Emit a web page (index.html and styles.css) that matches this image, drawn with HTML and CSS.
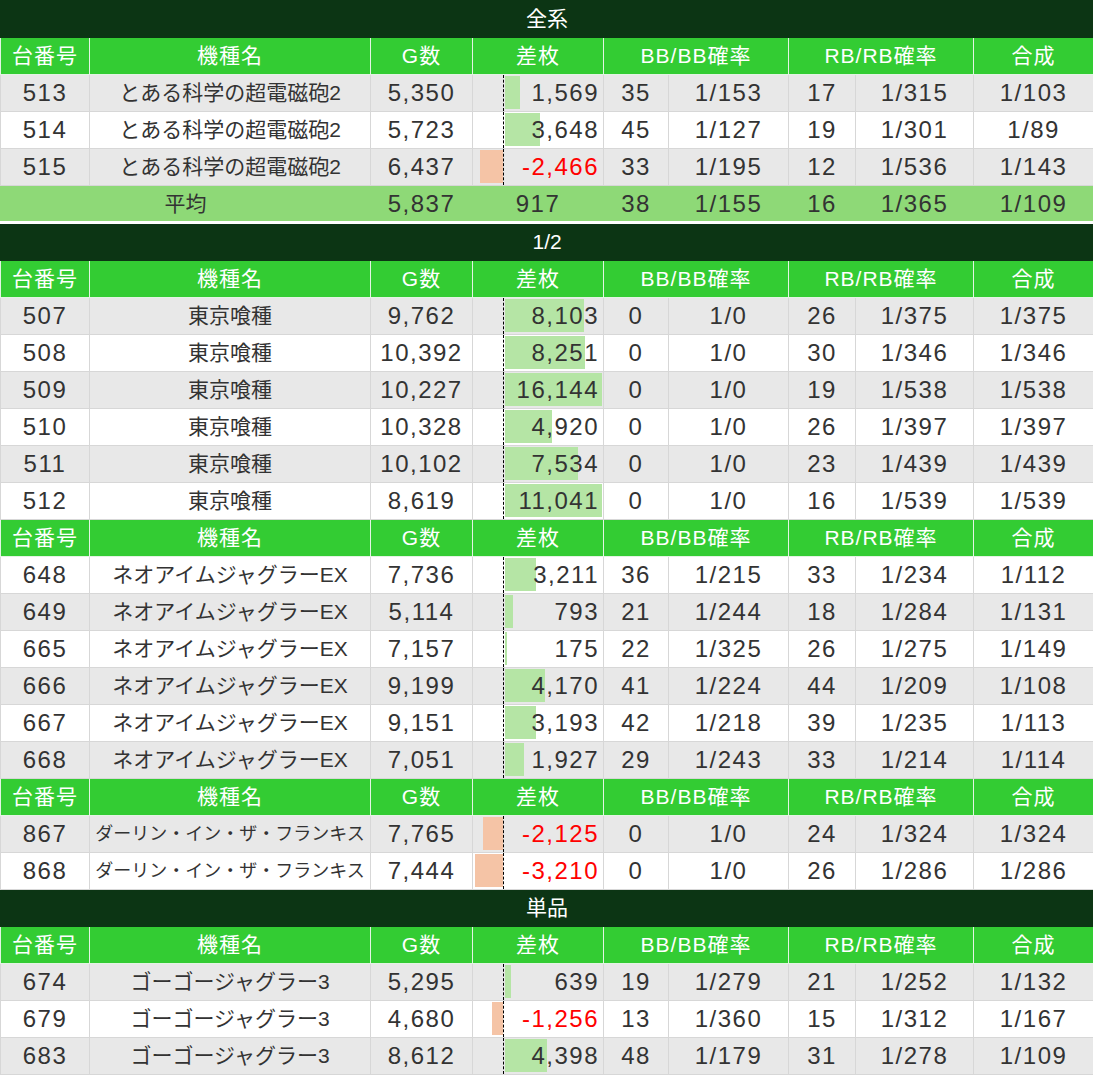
FILE: index.html
```html
<!DOCTYPE html>
<html lang="ja">
<head>
<meta charset="utf-8">
<title>データ</title>
<link rel="stylesheet" href="styles.css">
</head>
<body>
<table class="data">
<colgroup>
<col class="c-no"><col class="c-name"><col class="c-g"><col class="c-diff"><col class="c-bb"><col class="c-bbp"><col class="c-rb"><col class="c-rbp"><col class="c-sum">
</colgroup>
<tbody>
<tr class="title"><th colspan="9">全系</th></tr>
<tr class="head"><th>台番号</th><th>機種名</th><th>G数</th><th>差枚</th><th colspan="2">BB/BB確率</th><th colspan="2">RB/RB確率</th><th>合成</th></tr>
<tr class="g"><td>513</td><td class="name">とある科学の超電磁砲2</td><td class="num">5,350</td><td class="diff"><div class="bars"><div class="neg"></div><div class="pos"><span class="pb" style="width:15px"></span></div></div><span class="val">1,569</span></td><td class="num">35</td><td class="num">1/153</td><td class="num">17</td><td class="num">1/315</td><td class="num">1/103</td></tr>
<tr><td>514</td><td class="name">とある科学の超電磁砲2</td><td class="num">5,723</td><td class="diff"><div class="bars"><div class="neg"></div><div class="pos"><span class="pb" style="width:35px"></span></div></div><span class="val">3,648</span></td><td class="num">45</td><td class="num">1/127</td><td class="num">19</td><td class="num">1/301</td><td class="num">1/89</td></tr>
<tr class="g"><td>515</td><td class="name">とある科学の超電磁砲2</td><td class="num">6,437</td><td class="diff"><div class="bars"><div class="neg"><span class="nb" style="width:23px"></span></div><div class="pos"></div></div><span class="val minus">-2,466</span></td><td class="num">33</td><td class="num">1/195</td><td class="num">12</td><td class="num">1/536</td><td class="num">1/143</td></tr>
<tr class="avg"><td colspan="2" class="name">平均</td><td class="num">5,837</td><td class="num">917</td><td class="num">38</td><td class="num">1/155</td><td class="num">16</td><td class="num">1/365</td><td class="num">1/109</td></tr>
</tbody>
<tbody>
<tr class="title"><th colspan="9">1/2</th></tr>
<tr class="head"><th>台番号</th><th>機種名</th><th>G数</th><th>差枚</th><th colspan="2">BB/BB確率</th><th colspan="2">RB/RB確率</th><th>合成</th></tr>
<tr class="g"><td>507</td><td class="name">東京喰種</td><td class="num">9,762</td><td class="diff"><div class="bars"><div class="neg"></div><div class="pos"><span class="pb" style="width:79px"></span></div></div><span class="val">8,103</span></td><td class="num">0</td><td class="num">1/0</td><td class="num">26</td><td class="num">1/375</td><td class="num">1/375</td></tr>
<tr><td>508</td><td class="name">東京喰種</td><td class="num">10,392</td><td class="diff"><div class="bars"><div class="neg"></div><div class="pos"><span class="pb" style="width:80px"></span></div></div><span class="val">8,251</span></td><td class="num">0</td><td class="num">1/0</td><td class="num">30</td><td class="num">1/346</td><td class="num">1/346</td></tr>
<tr class="g"><td>509</td><td class="name">東京喰種</td><td class="num">10,227</td><td class="diff"><div class="bars"><div class="neg"></div><div class="pos"><span class="pb" style="width:97px"></span></div></div><span class="val">16,144</span></td><td class="num">0</td><td class="num">1/0</td><td class="num">19</td><td class="num">1/538</td><td class="num">1/538</td></tr>
<tr><td>510</td><td class="name">東京喰種</td><td class="num">10,328</td><td class="diff"><div class="bars"><div class="neg"></div><div class="pos"><span class="pb" style="width:47px"></span></div></div><span class="val">4,920</span></td><td class="num">0</td><td class="num">1/0</td><td class="num">26</td><td class="num">1/397</td><td class="num">1/397</td></tr>
<tr class="g"><td>511</td><td class="name">東京喰種</td><td class="num">10,102</td><td class="diff"><div class="bars"><div class="neg"></div><div class="pos"><span class="pb" style="width:73px"></span></div></div><span class="val">7,534</span></td><td class="num">0</td><td class="num">1/0</td><td class="num">23</td><td class="num">1/439</td><td class="num">1/439</td></tr>
<tr><td>512</td><td class="name">東京喰種</td><td class="num">8,619</td><td class="diff"><div class="bars"><div class="neg"></div><div class="pos"><span class="pb" style="width:97px"></span></div></div><span class="val">11,041</span></td><td class="num">0</td><td class="num">1/0</td><td class="num">16</td><td class="num">1/539</td><td class="num">1/539</td></tr>
<tr class="head"><th>台番号</th><th>機種名</th><th>G数</th><th>差枚</th><th colspan="2">BB/BB確率</th><th colspan="2">RB/RB確率</th><th>合成</th></tr>
<tr><td>648</td><td class="name">ネオアイムジャグラーEX</td><td class="num">7,736</td><td class="diff"><div class="bars"><div class="neg"></div><div class="pos"><span class="pb" style="width:31px"></span></div></div><span class="val">3,211</span></td><td class="num">36</td><td class="num">1/215</td><td class="num">33</td><td class="num">1/234</td><td class="num">1/112</td></tr>
<tr class="g"><td>649</td><td class="name">ネオアイムジャグラーEX</td><td class="num">5,114</td><td class="diff"><div class="bars"><div class="neg"></div><div class="pos"><span class="pb" style="width:8px"></span></div></div><span class="val">793</span></td><td class="num">21</td><td class="num">1/244</td><td class="num">18</td><td class="num">1/284</td><td class="num">1/131</td></tr>
<tr><td>665</td><td class="name">ネオアイムジャグラーEX</td><td class="num">7,157</td><td class="diff"><div class="bars"><div class="neg"></div><div class="pos"><span class="pb" style="width:2px"></span></div></div><span class="val">175</span></td><td class="num">22</td><td class="num">1/325</td><td class="num">26</td><td class="num">1/275</td><td class="num">1/149</td></tr>
<tr class="g"><td>666</td><td class="name">ネオアイムジャグラーEX</td><td class="num">9,199</td><td class="diff"><div class="bars"><div class="neg"></div><div class="pos"><span class="pb" style="width:40px"></span></div></div><span class="val">4,170</span></td><td class="num">41</td><td class="num">1/224</td><td class="num">44</td><td class="num">1/209</td><td class="num">1/108</td></tr>
<tr><td>667</td><td class="name">ネオアイムジャグラーEX</td><td class="num">9,151</td><td class="diff"><div class="bars"><div class="neg"></div><div class="pos"><span class="pb" style="width:31px"></span></div></div><span class="val">3,193</span></td><td class="num">42</td><td class="num">1/218</td><td class="num">39</td><td class="num">1/235</td><td class="num">1/113</td></tr>
<tr class="g"><td>668</td><td class="name">ネオアイムジャグラーEX</td><td class="num">7,051</td><td class="diff"><div class="bars"><div class="neg"></div><div class="pos"><span class="pb" style="width:19px"></span></div></div><span class="val">1,927</span></td><td class="num">29</td><td class="num">1/243</td><td class="num">33</td><td class="num">1/214</td><td class="num">1/114</td></tr>
<tr class="head"><th>台番号</th><th>機種名</th><th>G数</th><th>差枚</th><th colspan="2">BB/BB確率</th><th colspan="2">RB/RB確率</th><th>合成</th></tr>
<tr class="g"><td>867</td><td class="name small">ダーリン・イン・ザ・フランキス</td><td class="num">7,765</td><td class="diff"><div class="bars"><div class="neg"><span class="nb" style="width:20px"></span></div><div class="pos"></div></div><span class="val minus">-2,125</span></td><td class="num">0</td><td class="num">1/0</td><td class="num">24</td><td class="num">1/324</td><td class="num">1/324</td></tr>
<tr><td>868</td><td class="name small">ダーリン・イン・ザ・フランキス</td><td class="num">7,444</td><td class="diff"><div class="bars"><div class="neg"><span class="nb" style="width:28px"></span></div><div class="pos"></div></div><span class="val minus">-3,210</span></td><td class="num">0</td><td class="num">1/0</td><td class="num">26</td><td class="num">1/286</td><td class="num">1/286</td></tr>
</tbody>
<tbody>
<tr class="title"><th colspan="9">単品</th></tr>
<tr class="head"><th>台番号</th><th>機種名</th><th>G数</th><th>差枚</th><th colspan="2">BB/BB確率</th><th colspan="2">RB/RB確率</th><th>合成</th></tr>
<tr class="g"><td>674</td><td class="name">ゴーゴージャグラー3</td><td class="num">5,295</td><td class="diff"><div class="bars"><div class="neg"></div><div class="pos"><span class="pb" style="width:6px"></span></div></div><span class="val">639</span></td><td class="num">19</td><td class="num">1/279</td><td class="num">21</td><td class="num">1/252</td><td class="num">1/132</td></tr>
<tr><td>679</td><td class="name">ゴーゴージャグラー3</td><td class="num">4,680</td><td class="diff"><div class="bars"><div class="neg"><span class="nb" style="width:11px"></span></div><div class="pos"></div></div><span class="val minus">-1,256</span></td><td class="num">13</td><td class="num">1/360</td><td class="num">15</td><td class="num">1/312</td><td class="num">1/167</td></tr>
<tr class="g"><td>683</td><td class="name">ゴーゴージャグラー3</td><td class="num">8,612</td><td class="diff"><div class="bars"><div class="neg"></div><div class="pos"><span class="pb" style="width:42px"></span></div></div><span class="val">4,398</span></td><td class="num">48</td><td class="num">1/179</td><td class="num">31</td><td class="num">1/278</td><td class="num">1/109</td></tr>
</tbody>
</table>
</body>
</html>
```

FILE: styles.css
```css
html, body {
  margin: 0;
  padding: 0;
  background: #ffffff;
}

body {
  font-family: "Liberation Sans", "Noto Sans CJK JP", sans-serif;
  color: #333333;
}

.data {
  border-collapse: collapse;
  table-layout: fixed;
  width: 1093px;
}

.c-no { width: 89px; }
.c-name { width: 281px; }
.c-g { width: 102px; }
.c-diff { width: 131px; }
.c-bb { width: 65px; }
.c-bbp { width: 120px; }
.c-rb { width: 67px; }
.c-rbp { width: 118px; }
.c-sum { width: 120px; }

.data td,
.data th {
  height: 36px;
  padding: 0;
  border: 1px solid #d7d7d7;
  text-align: center;
  font-weight: normal;
  white-space: nowrap;
  vertical-align: middle;
  font-size: 24px;
  line-height: 28px;
  letter-spacing: 1.5px;
}

.data td.name {
  font-size: 21px;
  letter-spacing: 0;
}

.data td.name.small {
  font-size: 18px;
}

.data tr { background: #ffffff; }
.data tr.g { background: #e8e8e8; }

.data tr.title th {
  background: #0c3514;
  color: #ffffff;
  font-size: 21px;
  letter-spacing: 0;
  border-color: #0c3514;
}

.data tr.head th {
  background: #33cc33;
  color: #ffffff;
  font-size: 21px;
  letter-spacing: 1px;
  border-color: #e3f4e3;
}

.data tr.avg td {
  background: #8ed977;
  border-color: #8ed977;
  border-bottom: 3px solid #ffffff;
  height: 35px;
}

.data td.diff {
  position: relative;
  text-align: right;
}

.bars {
  position: absolute;
  inset: 0;
  display: flex;
}

.neg {
  width: 30px;
  display: flex;
  justify-content: flex-end;
  padding: 1px 0 2px;
}

.pos {
  flex: 1;
  display: flex;
  border-left: 1px dashed #000000;
  padding: 1px 0 2px 1px;
}

.pb {
  display: block;
  background: #b5e5a5;
}

.nb {
  display: block;
  background: #f5c4a6;
}

.val {
  position: relative;
  padding-right: 4px;
}

.val.minus {
  color: #ff0000;
}
```
